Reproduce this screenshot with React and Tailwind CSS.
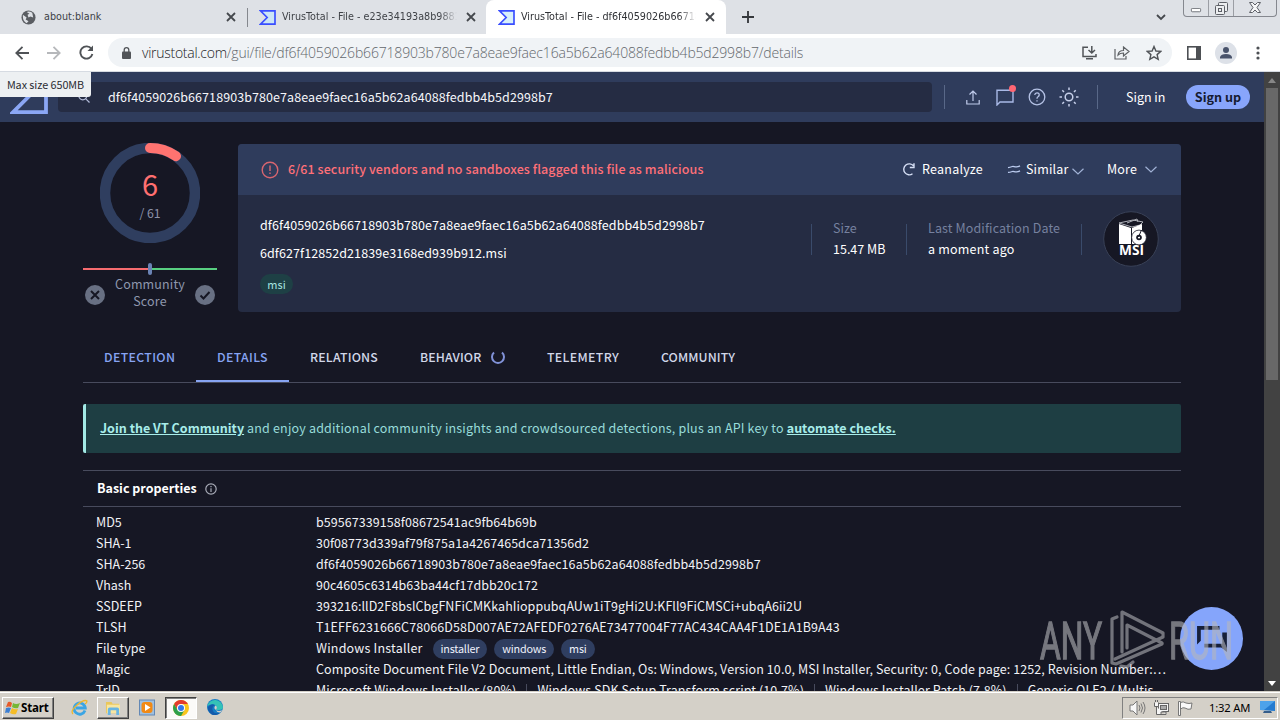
import React from 'react';

const HASH = 'df6f4059026b66718903b780e7a8eae9faec16a5b62a64088fedbb4b5d2998b7';

const PROPERTIES = [
  { label: 'MD5', value: 'b59567339158f08672541ac9fb64b69b', spacing: 'tracking-[0.06px]' },
  { label: 'SHA-1', value: '30f08773d339af79f875a1a4267465dca71356d2', spacing: 'tracking-[0.05px]' },
  { label: 'SHA-256', value: HASH, spacing: 'tracking-[0.08px]' },
  { label: 'Vhash', value: '90c4605c6314b63ba44cf17dbb20c172', spacing: 'tracking-[0.04px]' },
  {
    label: 'SSDEEP',
    value: '393216:llD2F8bslCbgFNFiCMKkahIioppubqAUw1iT9gHi2U:KFll9FiCMSCi+ubqA6ii2U',
    spacing: 'tracking-[0.05px]',
  },
  {
    label: 'TLSH',
    value: 'T1EFF6231666C78066D58D007AE72AFEDF0276AE73477004F77AC434CAA4F1DE1A1B9A43',
    spacing: 'tracking-[0.08px]',
  },
];

const TRID = [
  'Microsoft Windows Installer (80%)',
  'Windows SDK Setup Transform script (10.7%)',
  'Windows Installer Patch (7.8%)',
  'Generic OLE2 / Multis…',
];

function VtMark({ className, color, fill = 'none', width = 8 }) {
  return (
    <svg viewBox="0 0 100 90" className={className} fill={fill} stroke={color} strokeWidth={width}>
      <path d="M8 5H95V85H8L48 45Z" />
    </svg>
  );
}

function CloseIcon() {
  return (
    <svg viewBox="0 0 10 10" className="h-[10px] w-[10px] shrink-0" stroke="#45484d" strokeWidth="1.8">
      <path d="M1 1L9 9M9 1L1 9" />
    </svg>
  );
}

function TabStrip() {
  return (
    <div className="flex h-[34px] shrink-0 bg-[#dee1e6] font-['DejaVu_Sans_Condensed','DejaVu_Sans',sans-serif] text-[10.7px] text-[#3f4247] [font-stretch:condensed]">
      <div className="flex w-[247px] items-center pl-[21px] pr-[11px]">
        <svg viewBox="0 0 16 16" className="mr-[8px] h-[15px] w-[15px] shrink-0">
          <circle cx="8" cy="8" r="7.5" fill="#5a5d62" />
          <path d="M2 5L6 8L5 10L8 12L6 14Q2 12 2 7Z" fill="#dee1e6" />
          <path d="M6 2Q9 1 12 3L13 8L10 7L8 8L7 5L9 4Z" fill="#dee1e6" />
        </svg>
        <span className="grow">about:blank</span>
        <CloseIcon />
      </div>
      <div className="mt-[8px] h-[19px] w-px bg-[#85888e]" />
      <div className="flex w-[238px] items-center pl-[11px] pr-[10px]">
        <VtMark className="mr-[6px] h-[15px] w-[17px] shrink-0" color="#394eff" fill="#cbe5f6" width={10} />
        <span className="mr-[9px] w-[178px] overflow-hidden whitespace-nowrap [mask-image:linear-gradient(to_right,black_90%,transparent)]">
          VirusTotal - File - e23e34193a8b9881
        </span>
        <CloseIcon />
      </div>
      <div className="flex w-[240px] items-center rounded-t-[8px] bg-white pl-[12px] pr-[11px] text-[#303236]">
        <VtMark className="mr-[6px] h-[15px] w-[17px] shrink-0" color="#394eff" fill="#d8f0fa" width={10} />
        <span className="mr-[9px] w-[176px] overflow-hidden whitespace-nowrap [mask-image:linear-gradient(to_right,black_90%,transparent)]">
          VirusTotal - File - df6f4059026b66718
        </span>
        <CloseIcon />
      </div>
      <svg viewBox="0 0 13 13" className="ml-[16px] mt-[11px] h-[12px] w-[12px]" stroke="#35383c" strokeWidth="2">
        <path d="M6.5 0V13M0 6.5H13" />
      </svg>
      <div className="ml-auto flex pr-[3px]">
        <svg viewBox="0 0 10 7" className="mr-[17px] mt-[14px] h-[7px] w-[10px]" fill="none" stroke="#45484d" strokeWidth="1.8">
          <path d="M1 1L5 5L9 1" />
        </svg>
        <div className="flex h-[17px] w-[94px] rounded-b-[4px] border border-t-0 border-[#85888f]">
          <div className="flex w-[25px] justify-center border-r border-[#9b9ea4]">
            <svg viewBox="0 0 12 6" className="mt-[8px] h-[5px] w-[12px]">
              <rect x=".5" y=".5" width="11" height="4" rx="1" fill="#fff" stroke="#5d6067" />
            </svg>
          </div>
          <div className="flex w-[25px] justify-center border-r border-[#9b9ea4]">
            <svg viewBox="0 0 13 13" className="mt-[2px] h-[13px] w-[13px]" fill="#eceef0" stroke="#5d6067">
              <rect x="3.5" y=".5" width="9" height="9" rx="1" />
              <rect x=".5" y="3.5" width="9" height="9" rx="1" />
              <rect x="3.5" y="6.5" width="3" height="3" />
            </svg>
          </div>
          <div className="flex grow justify-center">
            <svg viewBox="0 0 12 11" className="mt-[2px] h-[11px] w-[12px]" fill="#f6f7f8" stroke="#5d6067">
              <path d="M.5.5H3.5L6 3L8.5.5H11.5L8 5.5L11.5 10.5H8.5L6 8L3.5 10.5H.5L4 5.5Z" />
            </svg>
          </div>
        </div>
      </div>
    </div>
  );
}

function Toolbar() {
  return (
    <div className="flex h-[38px] shrink-0 items-center border-b border-[#d6dbe2] bg-white pl-[15px] pr-[13px]">
      <svg viewBox="0 0 14 14" className="h-[14px] w-[14px]" fill="none" stroke="#4f5256" strokeWidth="1.8">
        <path d="M14 7H1M7.5 .8L1.3 7L7.5 13.2" />
      </svg>
      <svg viewBox="0 0 14 14" className="ml-[18px] h-[14px] w-[14px]" fill="none" stroke="#b6b8bb" strokeWidth="1.8">
        <path d="M0 7H13M6.5 .8L12.7 7L6.5 13.2" />
      </svg>
      <svg viewBox="0 0 15 15" className="ml-[18px] h-[15px] w-[15px]" fill="none" stroke="#4f5256" strokeWidth="1.9">
        <path d="M12.5 4A6.1 6.1 0 1 0 13.4 9" />
        <path d="M14 .5V6H8.5Z" fill="#4f5256" stroke="none" />
      </svg>
      <div className="ml-[14px] flex h-[29px] w-[1064px] items-center rounded-full bg-[#f0f3f6] pl-[14px] pr-[10px]">
        <svg viewBox="0 0 9 12" className="mr-[11px] h-[12px] w-[9px]">
          <rect y="4.5" width="9" height="7.5" rx="1" fill="#515458" />
          <path d="M2.2 5V3A2.3 2.3 0 0 1 6.8 3V5" fill="none" stroke="#515458" strokeWidth="1.3" />
        </svg>
        <span className="grow whitespace-nowrap font-['Open_Sans','Noto_Sans',sans-serif] text-[14px] font-light tracking-[-0.18px] text-[#63676c]">
          <span className="tracking-[-0.27px] text-[#202124]">virustotal.com</span>/gui/file/{HASH}/details
        </span>
        <svg viewBox="0 0 15 14" className="h-[14px] w-[15px]" fill="none" stroke="#515458" strokeWidth="1.5">
          <path d="M6 1.2H1V10.5H14V8M9.8 0V6.5M6.5 4L9.8 7L13 4M4 12.8H11" />
        </svg>
        <svg viewBox="0 0 16 14" className="ml-[17px] h-[14px] w-[16px]" fill="none" stroke="#5e6165" strokeWidth="1.2">
          <path d="M1 3V13H12V10M4 9Q4.5 4.5 9.5 4.5V1L15 5.5L9.5 10V7Q6 7 4 9Z" />
        </svg>
        <svg viewBox="0 0 16 16" className="ml-[16px] h-[16px] w-[16px]" fill="none" stroke="#515458" strokeWidth="1.4">
          <path d="M8 1.5L9.9 6L14.8 6.4L11.1 9.6L12.2 14.4L8 11.9L3.8 14.4L4.9 9.6L1.2 6.4L6.1 6Z" />
        </svg>
      </div>
      <svg viewBox="0 0 14 14" className="ml-[15px] h-[14px] w-[14px]">
        <rect x=".8" y=".8" width="12.4" height="12.4" fill="none" stroke="#4d5054" strokeWidth="1.6" />
        <rect x="9" width="5" height="14" fill="#4d5054" />
      </svg>
      <svg viewBox="0 0 22 22" className="ml-[14px] h-[22px] w-[22px]">
        <circle cx="11" cy="11" r="11" fill="#dde1e8" />
        <circle cx="11" cy="8" r="3" fill="#49536b" />
        <path d="M5 16.5V15Q6 12 11 12T17 15V16.5Z" fill="#49536b" />
      </svg>
      <svg viewBox="0 0 4 14" className="ml-auto mr-[7px] h-[14px] w-[4px]" fill="#4d5054">
        <circle cx="2" cy="2" r="1.6" />
        <circle cx="2" cy="7" r="1.6" />
        <circle cx="2" cy="12" r="1.6" />
      </svg>
    </div>
  );
}

function SiteHeader() {
  return (
    <div className="flex h-[50px] items-center bg-[#2f3c5c] text-[12.5px]">
      <VtMark className="ml-[10px] h-[34px] w-[38px]" color="#8ba7f5" width={10} />
      <div className="ml-[10px] flex h-[30px] w-[874px] items-center rounded-[4px] bg-[#252c43] pl-[20px] text-[#f5f6fa]">
        <svg viewBox="0 0 12 12" className="mr-[18px] h-[12px] w-[12px]" fill="none" stroke="#b4bddb" strokeWidth="1.2">
          <circle cx="4.8" cy="4.8" r="4" />
          <path d="M7.8 7.8L11.5 11.5" />
        </svg>
        <span className="tracking-[0.08px]">{HASH}</span>
      </div>
      <div className="ml-[12px] h-[24px] w-px bg-[#596888]" />
      <svg viewBox="0 0 14 15" className="ml-[21px] h-[15px] w-[14px]" fill="none" stroke="#c0cbeb" strokeWidth="1.2">
        <path d="M.8 10V14H13.2V10M7 11V1.2M3.5 4.5L7 1L10.5 4.5" />
      </svg>
      <div className="relative ml-[16px] h-[24px] w-[20px]">
        <svg viewBox="0 0 18 17" className="mt-[4px] h-[17px] w-[18px]" fill="none" stroke="#a9b9e6" strokeWidth="1.4">
          <path d="M1 16V1.2H17V13H4Z" />
        </svg>
        <div className="absolute right-0 top-0 h-[7px] w-[7px] rounded-full bg-[#ff6673]" />
      </div>
      <svg viewBox="0 0 18 18" className="ml-[12px] h-[18px] w-[18px]" fill="none" stroke="#b5c2e5" strokeWidth="1.3">
        <circle cx="9" cy="9" r="7.8" />
        <path d="M6.7 7Q7 4.8 9.1 4.9Q11.4 5 11.2 7Q11 8 10 8.8Q9 9.5 9 10.8M9 12.2V13.5" />
      </svg>
      <svg viewBox="0 0 20 20" className="ml-[13px] h-[20px] w-[20px]" fill="none" stroke="#c7d0ea" strokeWidth="1.5">
        <circle cx="10" cy="10" r="3.8" />
        <path d="M10 .5V3M10 17V19.5M.5 10H3M17 10H19.5M3.3 3.3L5 5M15 15L16.7 16.7M3.3 16.7L5 15M15 5L16.7 3.3" />
      </svg>
      <div className="ml-[18px] h-[24px] w-px bg-[#596888]" />
      <span className="ml-[28px] w-[60px] text-[12.5px] text-white">Sign in</span>
      <div className="flex h-[24px] w-[64px] items-center justify-center rounded-full bg-[#88a5fb] text-[12.6px] font-bold text-[#151a30]">
        Sign up
      </div>
    </div>
  );
}

function ScorePanel() {
  return (
    <div className="w-[134px] shrink-0">
      <div className="relative mx-auto -mt-px h-[100px] w-[100px]">
        <svg viewBox="0 0 100 100" className="h-[100px] w-[100px]" fill="none">
          <circle cx="50" cy="50" r="45" stroke="#2f3e5f" strokeWidth="10.5" />
          <path d="M50 5A45 45 0 0 1 76 13.2" stroke="#ff7370" strokeWidth="10" strokeLinecap="round" />
        </svg>
        <div className="absolute inset-0 flex flex-col items-center pt-[20px]">
          <div className="text-[29px] leading-[40px] text-[#ff6f70]">6</div>
          <div className="text-[12.3px] leading-[20px] text-[#8b91a8]">/ 61</div>
        </div>
      </div>
      <div className="mt-[20px] flex h-[12px] items-center">
        <div className="h-[2px] grow bg-[#f66c70]" />
        <div className="h-[12px] w-[4px] rounded-full bg-[#6b83b5]" />
        <div className="h-[2px] grow bg-[#58cf81]" />
      </div>
      <div className="flex items-center justify-between px-[2px]">
        <svg viewBox="0 0 20 20" className="mt-[6px] h-[20px] w-[20px]" strokeWidth="2">
          <circle cx="10" cy="10" r="10" fill="#687083" />
          <path d="M6 6L14 14M14 6L6 14" stroke="#161724" />
        </svg>
        <div className="w-[80px] text-center text-[12.5px] leading-[17px] tracking-[0.15px] text-[#8f97ae]">
          Community Score
        </div>
        <svg viewBox="0 0 20 20" className="mt-[6px] h-[20px] w-[20px]" fill="none" strokeWidth="2">
          <circle cx="10" cy="10" r="10" fill="#687083" />
          <path d="M5.5 10.5L8.5 13.5L14.5 7" stroke="#161724" />
        </svg>
      </div>
    </div>
  );
}

function ChevronDown({ className }) {
  return (
    <svg viewBox="0 0 12 7" className={className} fill="none" stroke="#a0b1d5" strokeWidth="1.2">
      <path d="M.5 .8L6 6L11.5 .8" />
    </svg>
  );
}

function FileCard() {
  return (
    <div className="h-[168px] w-[943px] overflow-hidden rounded-[4px] bg-[#252c43] text-[12.5px] text-white">
      <div className="flex h-[51px] items-center bg-[#2f3c5c] pl-[23px] pr-[23px]">
        <svg viewBox="0 0 18 18" className="mr-[9px] h-[18px] w-[18px]" fill="none" stroke="#d8656f" strokeWidth="1.4">
          <circle cx="9" cy="9" r="7.8" />
          <path d="M9 4.5V10M9 11.5V13" />
        </svg>
        <span className="grow font-medium tracking-[0.1px] text-[#ff7078]">
          6/61 security vendors and no sandboxes flagged this file as malicious
        </span>
        <svg viewBox="0 0 13 13" className="mr-[7px] h-[13px] w-[13px]" fill="none" stroke="#d5def4" strokeWidth="1.4">
          <path d="M11.5 2.8A5.5 5.5 0 1 0 10.5 10.8M12 .2V4.5H7.8" />
        </svg>
        <span className="w-[62px] whitespace-nowrap tracking-[0.25px]">Reanalyze</span>
        <svg viewBox="0 0 14 10" className="ml-[23px] mr-[5px] h-[9px] w-[14px]" fill="none" stroke="#bdcdf0" strokeWidth="1.4">
          <path d="M.3 2.8C5 2.8 4 1 7 1.8S11 2.5 13.7 1M.3 8.3C5 8.3 4 6.5 7 7.3S11 8 13.7 6.5" />
        </svg>
        <span className="w-[46px] tracking-[0.15px]">Similar</span>
        <ChevronDown className="mt-[3px] h-[7px] w-[12px]" />
        <span className="ml-[23px] w-[38px] tracking-[0.15px]">More</span>
        <ChevronDown className="mr-px h-[7px] w-[12px]" />
      </div>
      <div className="flex pl-[22px]">
        <div className="w-[551px] pt-[20px]">
          <div className="leading-[20px] tracking-[0.08px]">{HASH}</div>
          <div className="mt-[8px] leading-[20px] tracking-[0.08px]">6df627f12852d21839e3168ed939b912.msi</div>
          <div className="mt-[11px] flex h-[20px] w-[33px] items-center justify-center rounded-full bg-[#1e4045] text-[11px] text-[#a7e5e0]">
            msi
          </div>
        </div>
        <div className="mt-[29px] h-[31px] w-px bg-[#3a4b6b]" />
        <div className="w-[94px] pl-[21px] pt-[22px] leading-[21px]">
          <div className="text-[#76819f]">Size</div>
          <div>15.47 MB</div>
        </div>
        <div className="mt-[29px] h-[31px] w-px bg-[#3a4b6b]" />
        <div className="w-[174px] whitespace-nowrap pl-[21px] pt-[22px] leading-[21px]">
          <div className="tracking-[0.12px] text-[#76819f]">Last Modification Date</div>
          <div className="tracking-[0.2px]">a moment ago</div>
        </div>
        <div className="mt-[29px] h-[31px] w-px bg-[#3a4b6b]" />
        <svg viewBox="0 0 56 56" className="ml-[21px] mt-[16px] h-[56px] w-[56px]">
          <circle cx="28" cy="28" r="27.3" fill="#161724" stroke="#394157" />
          <path d="M16 12L30 9L40 11L37 14L29 16Z" fill="none" stroke="#aeb0b8" />
          <path d="M24 12L34 8L35 11" fill="none" stroke="#aeb0b8" />
          <path d="M16 13L28 17V33H16Z" fill="#fff" />
          <path d="M29 17L39 13V22H29Z" fill="#fff" />
          <path d="M29 20H35V33H29Z" fill="#fff" />
          <circle cx="36" cy="26.5" r="7.4" fill="#fff" stroke="#161724" strokeWidth=".8" />
          <circle cx="36" cy="26.5" r="2.8" fill="#161724" />
          <circle cx="36" cy="26.5" r="1.1" fill="#fff" />
          <path d="M35.5 26L38.5 19" stroke="#161724" />
          <text x="28.5" y="44" textAnchor="middle" textLength="25" lengthAdjust="spacingAndGlyphs" fontSize="13.5" className="font-['Open_Sans',sans-serif] font-bold" fill="#fff">
            MSI
          </text>
        </svg>
      </div>
    </div>
  );
}

function SectionTabs() {
  return (
    <div className="mt-[21px] flex h-[50px] border-b border-[#484b5d] text-[12.3px] font-medium leading-[49px] text-[#d2d7e9]">
      <div className="w-[113px] pl-[21px] tracking-[0.35px] text-[#87a4f3]">DETECTION</div>
      <div className="h-[49px] w-[93px] border-b-2 border-[#87a4f3] pl-[21px] tracking-[0.35px] text-[#87a4f3]">DETAILS</div>
      <div className="ml-[21px] w-[110px] tracking-[0.2px]">RELATIONS</div>
      <div className="flex w-[127px] items-center">
        <span className="w-[71px] tracking-[0.1px]">BEHAVIOR</span>
        <svg viewBox="0 0 14 14" className="-mt-px h-[14px] w-[14px]" fill="none" stroke="#8192d8" strokeWidth="2">
          <path d="M3 2.5A6 6 0 1 0 11 2.5" />
        </svg>
      </div>
      <div className="w-[114px] tracking-[0.35px]">TELEMETRY</div>
      <div className="tracking-[0.1px]">COMMUNITY</div>
    </div>
  );
}

function Chip({ children }) {
  return (
    <span className="flex h-[20px] items-center rounded-full bg-[#2f3e60] px-[8px] text-[10.8px] tracking-[-0.2px] text-[#eef1fb]">
      {children}
    </span>
  );
}

function Row({ label, children }) {
  return (
    <div className="flex h-[21px] items-center whitespace-nowrap pl-[13px]">
      <div className="w-[220px] shrink-0">{label}</div>
      {children}
    </div>
  );
}

function BasicProperties() {
  return (
    <div className="mt-[17px] border-t border-[#484b5d] text-[12.5px] text-[#f1f2f6]">
      <div className="flex h-[36px] items-center border-b border-[#484b5d] pl-[14px]">
        <span className="text-[12.5px] font-bold text-white">Basic properties</span>
        <svg viewBox="0 0 12 12" className="ml-[8px] h-[12px] w-[12px]" fill="none" stroke="#a9acb8" strokeWidth="1.2">
          <circle cx="6" cy="6" r="5.2" />
          <path d="M6 5.3V9M6 3V4.3" />
        </svg>
      </div>
      <div className="pt-[5px]">
        {PROPERTIES.map((item) => (
          <Row key={item.label} label={item.label}>
            <span className={item.spacing}>{item.value}</span>
          </Row>
        ))}
        <Row label="File type">
          <div className="flex items-center gap-[7px]">
            <span className="mr-[3px] tracking-[0.2px]">Windows Installer</span>
            <Chip>installer</Chip>
            <Chip>windows</Chip>
            <Chip>msi</Chip>
          </div>
        </Row>
        <Row label="Magic">
          <span className="tracking-[0.09px]">
            Composite Document File V2 Document, Little Endian, Os: Windows, Version 10.0, MSI Installer, Security: 0, Code page: 1252, Revision Number:…
          </span>
        </Row>
        <Row label="TrID">
          {TRID.map((item, i) => (
            <React.Fragment key={item}>
              {i > 0 && <span className="mx-[10px] h-[13px] w-px bg-[#484b5d]" />}
              <span className="tracking-[0.1px]">{item}</span>
            </React.Fragment>
          ))}
        </Row>
      </div>
    </div>
  );
}

function Scrollbar() {
  return (
    <div className="flex w-[16px] shrink-0 flex-col items-center bg-[#424242]">
      <svg viewBox="0 0 8 5" className="mt-[6px] h-[5px] w-[8px]" fill="#878787">
        <path d="M0 5L4 0L8 5Z" />
      </svg>
      <div className="mt-[5px] h-[292px] w-[12px] bg-[#686868]" />
      <svg viewBox="0 0 8 5" className="mb-[5px] mt-auto h-[5px] w-[8px]" fill="#fff">
        <path d="M0 0L4 5L8 0Z" />
      </svg>
    </div>
  );
}

function Watermark() {
  return (
    <svg viewBox="0 0 194 60" className="absolute left-[1039px] top-[537px] h-[60px] w-[194px] opacity-60">
      <g fill="#b6b7bb" stroke="#b6b7bb" strokeWidth="1.4" fontSize="51" className="font-[Roboto,sans-serif]">
        <text x="1" y="49.5" textLength="62" lengthAdjust="spacingAndGlyphs">ANY</text>
        <text x="130" y="49.5" textLength="64" lengthAdjust="spacingAndGlyphs">RUN</text>
      </g>
      <g fill="none" stroke="#b0b1b6" strokeWidth="3.2" strokeLinejoin="round" strokeLinecap="round">
        <path d="M78 8L73 10V54L77 55L123 35" />
        <path d="M83 43V3L124 24V28L76 50" />
        <path d="M88 39V16L123 34" />
        <path d="M82 57L88 58L94 53" />
      </g>
    </svg>
  );
}

function PageArea() {
  return (
    <div className="relative flex h-[619px] shrink-0 overflow-hidden bg-[#161724] font-['Noto_Sans_CJK_SC','Noto_Sans',sans-serif]">
      <div className="w-[1264px]">
        <SiteHeader />
        <div className="mt-[22px] w-[1181px] pl-[83px]">
          <div className="flex gap-[21px]">
            <ScorePanel />
            <FileCard />
          </div>
          <SectionTabs />
          <div className="mt-[21px] flex h-[49px] items-center rounded-[2px] border-l-[3px] border-[#a2e9e5] bg-[#1e3e43] pl-[14px] text-[12.5px] text-[#98dcda]">
            <p className="whitespace-nowrap tracking-[0.18px]">
              <a className="font-bold tracking-[0.02px] text-[#a8edea] underline">Join the VT Community</a> and enjoy additional
              community insights and crowdsourced detections, plus an API key to{' '}
              <a className="font-bold tracking-[0.02px] text-[#a8edea] underline">automate checks.</a>
            </p>
          </div>
          <BasicProperties />
        </div>
      </div>
      <Scrollbar />
      <div className="absolute left-[1180px] top-[535px] flex h-[63px] w-[63px] items-center justify-center rounded-full bg-[#85a5fb]">
        <svg viewBox="0 0 34 30" className="h-[28px] w-[32px]" fill="#172039">
          <path d="M1 1H25V5H5V17L1 21Z" />
          <path d="M28 8H33V29L27 24H9V20H28Z" />
        </svg>
      </div>
      <Watermark />
      <div className="absolute left-0 top-0 flex h-[25px] w-[91px] items-center justify-center rounded-br-[3px] bg-[#edf0f2] text-[10.8px] tracking-[-0.05px] text-[#2b2c33]">
        Max size 650MB
      </div>
    </div>
  );
}

function Taskbar() {
  return (
    <div className="flex h-[29px] shrink-0 items-center border-t border-[#d4d0c8] bg-[#d4d0c8] shadow-[inset_0_1px_0_#fff]">
      <div className="ml-[2px] mt-[3px] flex h-[22px] w-[52px] items-center border border-b-[#404040] border-l-white border-r-[#404040] border-t-white pl-[2px] shadow-[inset_-1px_-1px_0_#808080]">
        <svg viewBox="0 0 15 14" className="mr-[1px] h-[14px] w-[15px] shrink-0">
          <path d="M3 1Q5 0 7 2L6 6Q4 5 1 6Z" fill="#e65a2a" />
          <path d="M8 2Q11 4 15 2L13 7Q10 8 7 6Z" fill="#76b735" />
          <path d="M1 7Q4 6 6 7L4 12Q2 11 0 12Z" fill="#3b7fd4" />
          <path d="M7 7Q10 9 13 8L11 13Q8 14 5 12Z" fill="#f5bd27" />
        </svg>
        <span className="font-['Noto_Sans',sans-serif] text-[11.6px] font-bold leading-[18px] tracking-[-0.2px] text-black">Start</span>
      </div>
      <svg viewBox="0 0 17 17" className="ml-[17px] mt-[2px] h-[17px] w-[17px]" fill="none">
        <path d="M14 11.5A5.6 5.6 0 1 1 14.3 9H5" stroke="#3ba5e4" strokeWidth="2.8" />
        <path d="M2 15Q-1 12 6 6T16 2Q16 4 14 5" stroke="#efb72c" strokeWidth="1.3" />
      </svg>
      <div className="ml-[9px] mt-[3px] flex h-[22px] w-[32px] items-center justify-center border border-b-[#404040] border-l-white border-r-[#404040] border-t-white shadow-[inset_-1px_-1px_0_#808080]">
        <svg viewBox="0 0 17 16" className="h-[15px] w-[16px]">
          <path d="M1 2H7L8 4H15V14H1Z" fill="#e9c75c" />
          <path d="M2 5H16V14H2Z" fill="#f8e6a0" />
          <path d="M3 16V10Q3 8 5 8H13Q15 8 15 10V16H12V11H6V16Z" fill="#68b5e3" />
        </svg>
      </div>
      <svg viewBox="0 0 16 16" className="ml-[10px] mt-[3px] h-[17px] w-[16px]">
        <rect x=".5" y=".5" width="15" height="15" fill="#9fc0df" stroke="#6388b5" />
        <rect x="2.5" y="2.5" width="11" height="11" rx="3" fill="#f18a16" />
        <path d="M6 4.5V11.5L11.5 8Z" fill="#fff" />
      </svg>
      <div className="ml-[10px] mt-[3px] flex h-[22px] w-[32px] items-center justify-center border border-b-white border-l-[#404040] border-r-white border-t-[#404040] bg-[#fbfaf8] shadow-[inset_1px_1px_0_#808080]">
        <svg viewBox="0 0 16 16" className="h-[16px] w-[16px]">
          <circle cx="8" cy="8" r="8" fill="#f9c51c" />
          <path d="M1.1 4A8 8 0 0 1 14.9 4H8L4.6 10Z" fill="#e33b2e" />
          <path d="M1.1 4A8 8 0 0 0 8 16L11.5 10H4.5Z" fill="#2d9f4b" />
          <circle cx="8" cy="8" r="4" fill="#fff" />
          <circle cx="8" cy="8" r="3" fill="#3478ea" />
        </svg>
      </div>
      <svg viewBox="0 0 16 16" className="ml-[10px] mt-[2px] h-[16px] w-[16px]">
        <circle cx="8" cy="8" r="8" fill="#167cc5" />
        <path d="M.3 7A8 8 0 0 1 16 8Q16 11 12 11H9Q11 8 8 6T.3 7Z" fill="#35c2b7" />
        <path d="M8 6Q4 8 6 12T14 13Q9 18 4 15Q0 12 1 8Q4 4 8 6Z" fill="#145bab" />
        <path d="M9 11Q11 8 8.5 6.5Q6 9 9 11Q12 13 15 11L13.5 13.5Q10 14 9 11Z" fill="#d4d0c8" />
      </svg>
      <div className="ml-auto mr-[2px] mt-[3px] flex h-[22px] w-[156px] items-center border border-b-white border-l-[#808080] border-r-white border-t-[#808080] pl-[6px]">
        <svg viewBox="0 0 17 16" className="h-[16px] w-[17px]" fill="#f7f7f7" stroke="#777" strokeWidth="1">
          <path d="M1 5H4L8 1V15L4 11H1Z" />
          <path d="M10 5Q12 8 10 11M12 3.5Q15 8 12 12.5M14 2Q18 8 14 14" fill="none" />
        </svg>
        <svg viewBox="0 0 16 16" className="ml-[7px] h-[16px] w-[16px]" fill="#f5f5f5" stroke="#666" strokeWidth="1">
          <rect x="5.5" y="3.5" width="10" height="8" />
          <rect x="7.5" y="5.5" width="6" height="4" fill="#aaa" />
          <path d="M1.5 2.5V6.5H5.5V2.5M2.5 0V2M4.5 0V2M3.5 7V14.5H13M8 14.5V12H13V14.5Z" />
        </svg>
        <svg viewBox="0 0 16 16" className="ml-[8px] h-[16px] w-[16px]" fill="#f9f9f9" stroke="#777" strokeWidth="1">
          <path d="M1.5 15.5V1.5H3.5V15.5ZM3.5 2.5Q6 1 9 3Q12 4 15 3L14 9Q11 10 8 8Q6 7 3.5 9Z" />
        </svg>
        <span className="ml-[16px] whitespace-nowrap font-['Noto_Sans',sans-serif] text-[11.2px] leading-[18px] tracking-[-0.15px] text-black">1:32 AM</span>
        <svg viewBox="0 0 16 13" className="ml-auto mr-[1px] h-[13px] w-[16px]">
          <path d="M0 0H15V10L0 9Z" fill="#247bd0" />
          <path d="M0 0H15L4 9H0Z" fill="#4da2ea" />
          <path d="M4 10H11L12 12H3Z" fill="#355d8a" />
        </svg>
      </div>
    </div>
  );
}

export default function App() {
  return (
    <div className="flex h-[720px] w-[1280px] flex-col overflow-hidden font-['Noto_Sans','Open_Sans',sans-serif]">
      <TabStrip />
      <Toolbar />
      <PageArea />
      <Taskbar />
    </div>
  );
}
